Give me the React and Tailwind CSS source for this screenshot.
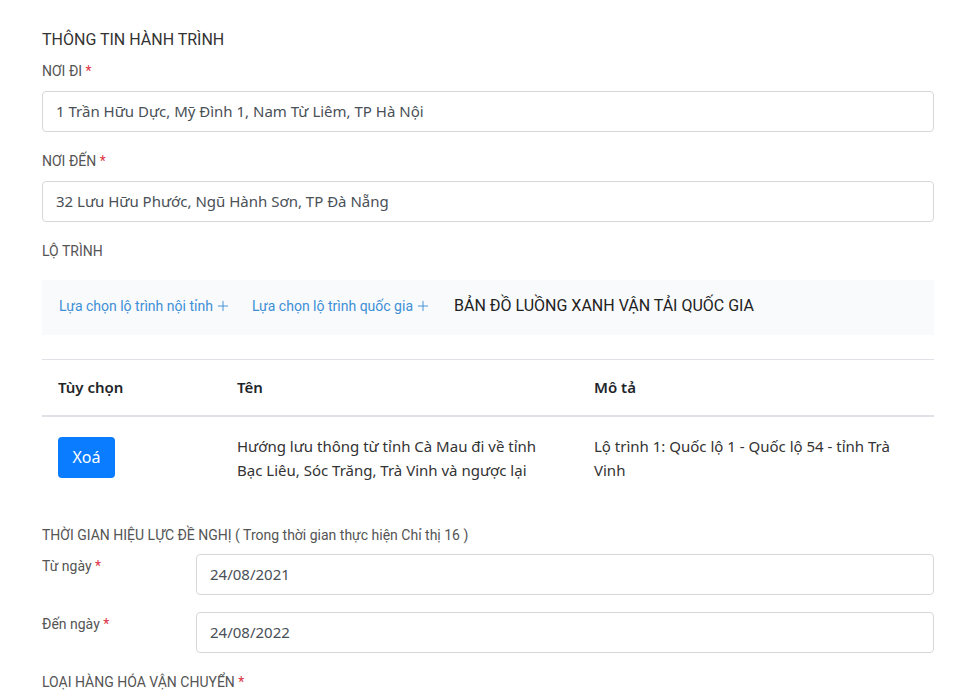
import { Plus } from "lucide-react";

const Req = () => <span className="text-[#dc3545]"> *</span>;

const Label = ({ children, required, className = "" }) => (
  <div
    className={`text-[14px] text-[#555] font-['Roboto',sans-serif] leading-5 ${className}`}
  >
    {children}
    {required && <Req />}
  </div>
);

const Field = ({ value, className = "" }) => (
  <div
    className={`h-[41px] flex items-center px-[13px] border border-[#d6d9dc] rounded bg-white text-[15px] text-[#495057] font-['Noto_Sans',sans-serif] ${className}`}
  >
    {value}
  </div>
);

const rows = [
  {
    name: "Hướng lưu thông từ tỉnh Cà Mau đi về tỉnh Bạc Liêu, Sóc Trăng, Trà Vinh và ngược lại",
    desc: "Lộ trình 1: Quốc lộ 1 - Quốc lộ 54 - tỉnh Trà Vinh",
  },
];

export default function App() {
  return (
    <div className="w-[971px] h-[696px] overflow-hidden bg-white pl-[42px] pr-[37px] pt-[30px]">
      <h2 className="text-[16px] text-[#333] font-['Roboto',sans-serif] leading-5">
        THÔNG TIN HÀNH TRÌNH
      </h2>

      <Label required className="mt-[11px]">
        NƠI ĐI
      </Label>
      <Field className="mt-[10px]" value="1 Trần Hữu Dực, Mỹ Đình 1, Nam Từ Liêm, TP Hà Nội" />

      <Label required className="mt-[19px]">
        NƠI ĐẾN
      </Label>
      <Field className="mt-[10px]" value="32 Lưu Hữu Phước, Ngũ Hành Sơn, TP Đà Nẵng" />

      <Label className="mt-[19px]">LỘ TRÌNH</Label>

      <div className="mt-[19px] h-[55px] bg-[#f9fafc] flex items-center pl-[17px] gap-[21px] font-['Roboto',sans-serif]">
        <button className="flex items-center gap-[2px] text-[14px] text-[#3d8fd6] -mt-[3px]">
          Lựa chọn lộ trình nội tỉnh
          <Plus className="w-4 h-4" strokeWidth={1.4} />
        </button>
        <button className="flex items-center gap-[2px] text-[14px] text-[#3d8fd6] -mt-[3px]">
          Lựa chọn lộ trình quốc gia
          <Plus className="w-4 h-4" strokeWidth={1.4} />
        </button>
        <span className="text-[16px] text-[#222] ml-[2px] -mt-[3px]">
          BẢN ĐỒ LUỒNG XANH VẬN TẢI QUỐC GIA
        </span>
      </div>

      <table className="mt-[24px] w-full border-t border-[#dee2e6] font-['Noto_Sans',sans-serif] text-[15px] text-[#212529]">
        <thead>
          <tr className="border-b-2 border-[#dee2e6]">
            <th className="w-[179px] h-[56px] px-4 text-left font-semibold">Tùy chọn</th>
            <th className="w-[357px] px-4 text-left font-semibold">Tên</th>
            <th className="px-4 text-left font-semibold">Mô tả</th>
          </tr>
        </thead>
        <tbody>
          {rows.map((r) => (
            <tr key={r.desc}>
              <td className="px-4 pt-5 pb-4 align-top">
                <button className="h-[41px] w-[57px] rounded bg-[#0a7cff] text-white text-[16px]">
                  Xoá
                </button>
              </td>
              <td className="px-4 pt-[17px] pb-4 align-top leading-6 text-[#333]">{r.name}</td>
              <td className="px-4 pt-[17px] pb-4 align-top leading-6 text-[#333]">{r.desc}</td>
            </tr>
          ))}
        </tbody>
      </table>

      <Label className="mt-[27px]">
        THỜI GIAN HIỆU LỰC ĐỀ NGHỊ ( Trong thời gian thực hiện Chỉ thị 16 )
      </Label>

      <div className="mt-[9px] flex">
        <Label required className="w-[154px] pt-[2px]">
          Từ ngày
        </Label>
        <Field className="flex-1" value="24/08/2021" />
      </div>
      <div className="mt-[17px] flex">
        <Label required className="w-[154px] pt-[2px]">
          Đến ngày
        </Label>
        <Field className="flex-1" value="24/08/2022" />
      </div>

      <Label required className="mt-[19px]">
        LOẠI HÀNG HÓA VẬN CHUYỂN
      </Label>
    </div>
  );
}
